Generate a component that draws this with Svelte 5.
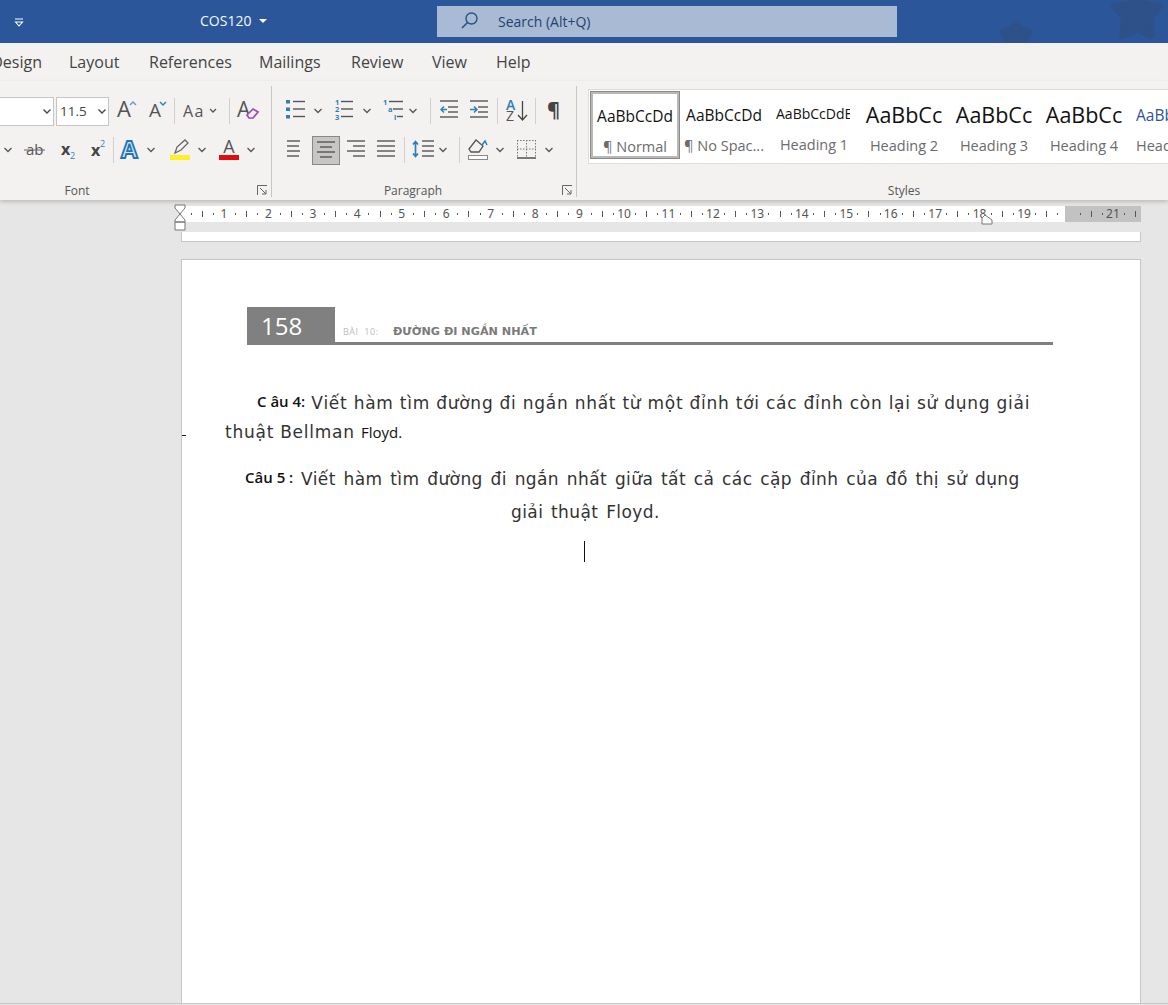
<script>
  const tabs = ['Design', 'Layout', 'References', 'Mailings', 'Review', 'View', 'Help'];

  const styles = [
    { sample: 'AaBbCcDd', label: '¶ Normal', kind: 'normal', on: true },
    { sample: 'AaBbCcDd', label: '¶ No Spac...', kind: 'normal' },
    { sample: 'AaBbCcDdE', label: 'Heading 1', kind: 'h1' },
    { sample: 'AaBbCc', label: 'Heading 2', kind: 'big' },
    { sample: 'AaBbCc', label: 'Heading 3', kind: 'big' },
    { sample: 'AaBbCc', label: 'Heading 4', kind: 'big' },
    { sample: 'AaBbCcDd', label: 'Heading 5', kind: 'h5' }
  ];

  // ruler: 0 sits at x=-1.5 inside the ruler box, one cm is 44.45px
  const cm = 44.45;
  const zero = -1.5;
  const marks = [];
  for (let q = 1; q <= 86; q++) {
    const v = q / 4;
    if (v === 20) continue;
    const x = zero + v * cm;
    if (q % 4 === 0) marks.push({ x, num: v });
    else if (q % 2 === 0) marks.push({ x, tall: true });
    else marks.push({ x });
  }
</script>

{#snippet chev(w)}
  <svg width={w} height="30" viewBox="0 0 {w} 30"><path d="M{w / 2 - 3.5} 13l3.5 3.5 3.5-3.5" fill="none" stroke="#555" stroke-width="1.3"/></svg>
{/snippet}

{#snippet launcher()}
  <svg class="launch" width="11" height="11" viewBox="0 0 11 11"><path d="M.5 10V.5H10M3 3l6 6M9 5v4H5" fill="none" stroke="#666" stroke-width="1"/></svg>
{/snippet}

{#snippet bars(x, ys, w)}
  {#each ys as y}<path d="M{x} {y}h{w}" stroke="#555" stroke-width="1.4"/>{/each}
{/snippet}

<div class="app">
  <header class="title">
    <div class="qat">
      <svg width="12" height="12" viewBox="0 0 12 12"><path d="M2 3h8M2.500 6l3.500 4 3.500-4z" fill="none" stroke="#fff" stroke-width="1.1"/></svg>
    </div>
    <div class="docname">COS120 <span class="caret"></span></div>
    <div class="search">
      <svg width="20" height="20" viewBox="0 0 20 20"><circle cx="11.500" cy="7.500" r="5.500" fill="none" stroke="#2b4f86" stroke-width="1.4"/><path d="M7.500 11.500L2 17" stroke="#2b4f86" stroke-width="1.6"/></svg>
      <span>Search (Alt+Q)</span>
    </div>
    <svg class="star one" width="36" height="30" viewBox="0 0 36 30"><path d="M18 5l6 6 7 2-4 8v8H9v-8l-4-8 7-2z" fill="#2d5188" stroke="#2d5188" stroke-width="6" stroke-linejoin="round"/></svg>
    <svg class="star two" width="56" height="42" viewBox="0 0 56 42"><path d="M28-8l8 12 15 2-10 12 2 18-15-6-15 6 2-18L5 6l15-2z" fill="#2d5188" stroke="#2d5188" stroke-width="6" stroke-linejoin="round"/></svg>
  </header>

  <nav class="tabs">
    {#each tabs as t}<span>{t}</span>{/each}
  </nav>

  <section class="ribbon">
    <div class="group font">
      <div class="row">
        <div class="combo name"><svg width="8" height="5" viewBox="0 0 8 5"><path d="M.5.5L4 4 7.500.5" fill="none" stroke="#444" stroke-width="1.3"/></svg></div>
        <div class="combo size"><span>11.5</span><svg width="8" height="5" viewBox="0 0 8 5"><path d="M.5.5L4 4 7.500.5" fill="none" stroke="#444" stroke-width="1.3"/></svg></div>
        <svg width="32" height="30" viewBox="0 0 32 30"><text x="3" y="21" class="glyph big">A</text><path d="M16 9l3-3 3 3" fill="none" stroke="#5a9fc9" stroke-width="1.4"/></svg>
        <svg width="28" height="30" viewBox="0 0 28 30"><text x="3" y="21" class="glyph mid">A</text><path d="M14 6l3 3 3-3" fill="none" stroke="#2f86bf" stroke-width="1.5"/></svg>
        <i class="sep"></i>
        <svg width="54" height="30" viewBox="0 0 54 30"><text x="8" y="21" class="glyph aa">Aa</text><path d="M35 13l3 3 3-3" fill="none" stroke="#555" stroke-width="1.3"/></svg>
        <i class="sep"></i>
        <svg width="34" height="30" viewBox="0 0 34 30"><text x="7" y="21" class="glyph mid2">A</text><path d="M17 19l6-6 5 3-5 6h-4z" fill="#f6ecf7" stroke="#9a4fb0" stroke-width="1.7"/></svg>
      </div>
      <div class="row r2">
        {@render chev(16)}
        <svg width="38" height="30" viewBox="0 0 38 30"><text x="10" y="20" class="glyph ab">ab</text><path d="M8 15h21" stroke="#666" stroke-width="1"/></svg>
        <svg width="24" height="30" viewBox="0 0 24 30"><text x="7" y="20" class="glyph sub">x</text><text x="16" y="24" class="glyph tiny">2</text></svg>
        <svg width="35" height="30" viewBox="0 0 35 30"><text x="13" y="21" class="glyph sub">x</text><text x="22" y="12" class="glyph tiny">2</text></svg>
        <i class="sep"></i>
        <svg width="31" height="30" viewBox="0 0 31 30"><text x="7" y="23" class="glyph fx">A</text></svg>
        {@render chev(12)}
        <svg width="40" height="30" viewBox="0 0 40 30"><path d="M18 18l2-6 8-7 3 3-7 7z" fill="#f3f2f1" stroke="#666" stroke-width="1.3"/><rect x="13" y="20" width="20" height="5" fill="#fdf126"/></svg>
        {@render chev(10)}
        <svg width="39" height="30" viewBox="0 0 39 30"><text x="22" y="18" text-anchor="middle" class="glyph mid3">A</text><rect x="12" y="20" width="20" height="5" fill="#e00f0f"/></svg>
        {@render chev(10)}
      </div>
      <div class="label">Font{@render launcher()}</div>
    </div>

    <div class="group para">
      <div class="row">
        <svg width="38" height="30" viewBox="0 0 38 30"><g fill="#2f7fb5"><rect x="14" y="4" width="4" height="3.500"/><rect x="14" y="11.500" width="4" height="3.500"/><rect x="14" y="19" width="4" height="3.500"/></g>{@render bars(21, [5.5, 13, 20.5], 12)}</svg>
        {@render chev(16)}
        <svg width="32" height="30" viewBox="0 0 32 30"><text x="9" y="9" class="glyph digit">1</text><text x="9" y="16" class="glyph digit">2</text><text x="9" y="24" class="glyph digit">3</text>{@render bars(15, [5.5, 13, 20.5], 12)}</svg>
        {@render chev(18)}
        <svg width="29" height="30" viewBox="0 0 29 30"><text x="7" y="9" class="glyph digit">1</text><text x="12" y="16" class="glyph digit">a</text><text x="18" y="24" class="glyph digit">i</text>{@render bars(13, [5.5], 14)}{@render bars(17, [13], 10)}{@render bars(21, [20.5], 6)}</svg>
        {@render chev(16)}
        <i class="sep wide"></i>
        <svg width="26" height="30" viewBox="0 0 26 30">{@render bars(0, [5, 21], 18)}{@render bars(8, [11, 16], 10)}<path d="M7 13.500H1m3-3l-3 3 3 3" fill="none" stroke="#2f7fb5" stroke-width="1.5"/></svg>
        <svg width="31" height="30" viewBox="0 0 31 30">{@render bars(4, [5, 21], 18)}{@render bars(12, [11, 16], 10)}<path d="M4 13.500h7m-3-3l3 3-3 3" fill="none" stroke="#2f7fb5" stroke-width="1.5"/></svg>
        <i class="sep"></i>
        <svg width="37" height="30" viewBox="0 0 37 30"><text x="8" y="14" class="glyph az blue">A</text><text x="8" y="25" class="glyph az">Z</text><path d="M24.500 5v19m-4.500-5l4.500 5 4.500-5" fill="none" stroke="#444" stroke-width="1.3"/></svg>
        <i class="sep"></i>
        <svg width="38" height="30" viewBox="0 0 38 30"><text x="11" y="21" class="glyph pil">¶</text></svg>
      </div>
      <div class="row r2">
        <svg width="28" height="30" viewBox="0 0 28 30">{@render bars(15, [6, 16], 18)}{@render bars(15, [11, 21], 12)}</svg>
        <div class="active"><svg width="18" height="18" viewBox="0 0 18 18">{@render bars(0, [1, 11], 18)}{@render bars(3, [6, 16], 12)}</svg></div>
        <svg width="30" height="30" viewBox="0 0 30 30">{@render bars(7, [6, 16], 18)}{@render bars(13, [11, 21], 12)}</svg>
        <svg width="34" height="30" viewBox="0 0 34 30">{@render bars(7, [6, 11, 16, 21], 18)}</svg>
        <i class="sep"></i>
        <svg width="32" height="30" viewBox="0 0 32 30"><path d="M10.500 7v14M8 9.500l2.500-3 2.500 3M8 18.500l2.500 3 2.500-3" fill="none" stroke="#2f7fb5" stroke-width="1.7"/>{@render bars(17, [6, 11, 16, 21], 12)}</svg>
        {@render chev(12)}
        <i class="sep wide2"></i>
        <svg width="34" height="30" viewBox="0 0 34 30"><path d="M9 14l7-9 7 6-4 6h-8z" fill="#f3f2f1" stroke="#555" stroke-width="1.3"/><path d="M22 10l3-4 2 4" fill="none" stroke="#2f7fb5" stroke-width="1.5"/><rect x="8.500" y="20.500" width="19" height="4" fill="#fff" stroke="#888"/></svg>
        {@render chev(12)}
        <svg width="37" height="30" viewBox="0 0 37 30"><path d="M11 5.500h19M11 14h19M20.500 5v18M11.500 5v18M29.500 5v18" fill="none" stroke="#777" stroke-width="1" stroke-dasharray="1.500 1.500"/><path d="M11 23h19" stroke="#444" stroke-width="1.400"/></svg>
        {@render chev(12)}
      </div>
      <div class="label">Paragraph{@render launcher()}</div>
    </div>

    <div class="group gallery">
      <div class="frame">
        {#each styles as s}
          <div class="style" class:on={s.on}>
            <div class="sample {s.kind}">{s.sample}</div>
            <div class="name">{s.label}</div>
          </div>
        {/each}
      </div>
      <div class="label">Styles</div>
    </div>
  </section>

  <main class="work">
    <div class="ruler">
      <div class="grey"></div>
      {#each marks as m}
        {#if m.num}
          <span class="num" style="left:{m.x}px">{m.num}</span>
        {:else}
          <span class="tick" class:tall={m.tall} style="left:{m.x}px"></span>
        {/if}
      {/each}
      <svg class="indent" width="12" height="28" viewBox="0 0 12 28"><path d="M1 1h10v3L6 10 1 4zM6 10l5 6v2H1v-2zM1 18h10v8H1z" fill="#fff" stroke="#777"/></svg>
      <svg class="right-indent" width="12" height="11" viewBox="0 0 12 11"><path d="M1 10V4l3-3 7 5v4z" fill="#fff" stroke="#777"/></svg>
    </div>
    <div class="page-end"></div>
    <article class="page">
      <div class="head">
        <div class="pageno">158</div>
        <div class="lesson"><span class="bai">BÀI 10:</span><b>ĐƯỜNG ĐI NGẮN NHẤT</b></div>
      </div>
      <p class="l1"><span class="cau">C âu 4:</span> Viết hàm tìm đường đi ngắn nhất từ một đỉnh tới các đỉnh còn lại sử dụng giải</p>
      <p class="l2">thuật Bellman <span class="floyd">Floyd.</span></p>
      <p class="l3"><span class="cau">Câu 5 :</span> Viết hàm tìm đường đi ngắn nhất giữa tất cả các cặp đỉnh của đồ thị sử dụng</p>
      <p class="l4">giải thuật Floyd.</p>
      <div class="cursor"></div>
      <span class="mark"></span>
    </article>
  </main>
</div>

<style>
  :global(body) {
    margin: 0;
    background: #e6e6e6;
  }
  .app {
    width: 1168px;
    height: 1005px;
    overflow: hidden;
    font-family: "Open Sans", "Noto Sans", sans-serif;
    display: flex;
    flex-direction: column;
  }

  .title {
    position: relative;
    height: 43px;
    flex: none;
    background: #2b579a;
    display: flex;
    align-items: center;
    color: #fff;
    overflow: hidden;
  }
  .qat {
    width: 200px;
    padding-left: 13px;
    box-sizing: border-box;
    display: flex;
  }
  .docname {
    width: 237px;
    font-size: 14px;
    color: #f4f6fa;
    display: flex;
    align-items: center;
    gap: 8px;
    margin-bottom: 2px;
  }
  .caret {
    width: 0;
    height: 0;
    border: 4px solid transparent;
    border-top: 4px solid #fff;
    border-bottom: 0;
  }
  .search {
    width: 460px;
    height: 31px;
    margin-bottom: 1px;
    background: #a9bbd4;
    color: #23416f;
    font-size: 14px;
    display: flex;
    align-items: center;
    gap: 18px;
    padding-left: 23px;
    box-sizing: border-box;
  }
  .star {
    position: absolute;
  }
  .star.one {
    left: 998px;
    top: 19px;
  }
  .star.two {
    left: 1109px;
    top: 0;
  }

  .tabs {
    height: 38px;
    flex: none;
    box-sizing: border-box;
    background: #f3f2f1;
    display: grid;
    grid-template-columns: 69px 80px 110px 92px 81px 64px 60px;
    align-items: center;
    font-size: 16px;
    color: #444;
  }
  .tabs span:first-child {
    justify-self: end;
    padding-right: 27px;
  }

  .ribbon {
    height: 119px;
    flex: none;
    background: #f3f2f1;
    display: flex;
    box-shadow: 0 2px 4px rgba(0, 0, 0, 0.18);
    position: relative;
    z-index: 1;
  }
  .group {
    position: relative;
    box-sizing: border-box;
    display: flex;
    flex-direction: column;
    padding-top: 15px;
    overflow: hidden;
  }
  .group::after {
    content: "";
    position: absolute;
    right: 0;
    top: 5px;
    bottom: 3px;
    width: 1px;
    background: #c8c6c4;
  }
  .font {
    width: 272px;
  }
  .para {
    width: 305px;
  }
  .gallery {
    flex: 1;
    padding-top: 8px;
  }
  .gallery::after {
    display: none;
  }
  .row {
    height: 30px;
    display: flex;
    align-items: center;
    flex: none;
  }
  .r2 {
    margin-top: 9px;
  }
  .row svg {
    flex: none;
  }
  .label {
    margin-top: auto;
    height: 21px;
    line-height: 24px;
    font-size: 12px;
    color: #555;
    text-align: center;
    position: relative;
    padding-right: 118px;
  }
  .gallery .label {
    padding-right: 0;
    padding-left: 63px;
  }
  .para .label {
    padding-right: 23px;
  }
  .launch {
    position: absolute;
    right: 4px;
    top: 6px;
  }

  .sep {
    width: 1px;
    height: 26px;
    background: #d2d0ce;
    flex: none;
  }
  .wide {
    margin: 0 9px;
  }
  .wide2 {
    margin: 0 0 0 10px;
  }

  .combo {
    height: 29px;
    box-sizing: border-box;
    border: 1px solid #c8c6c4;
    background: #fff;
    display: flex;
    align-items: center;
    justify-content: space-between;
    font-size: 13.500px;
    color: #444;
    padding-right: 2px;
    flex: none;
  }
  .combo.name {
    width: 54px;
    border-left: 0;
    justify-content: flex-end;
    margin-right: 2px;
  }
  .combo.size {
    width: 53px;
    padding-left: 3px;
    margin-right: 5px;
  }

  .glyph {
    font-family: "Open Sans", sans-serif;
    fill: #555;
  }
  .big { font-size: 22px; }
  .mid { font-size: 19px; }
  .aa { font-size: 16px; letter-spacing: 1.500px; }
  .mid2 { font-size: 21px; }
  .mid3 { font-size: 18px; }
  .ab { font-size: 15px; }
  .sub { font-size: 16px; font-weight: 700; fill: #444; }
  .tiny { font-size: 9px; fill: #2f86bf; }
  .fx {
    font-size: 24px;
    font-weight: 700;
    fill: #cfe4f4;
    stroke: #1f76b5;
    stroke-width: 1.800px;
  }
  .digit { font-size: 7.500px; font-weight: 700; fill: #2f7fb5; }
  .az { font-size: 14px; }
  .blue { fill: #2f7fb5; font-weight: 600; }
  .pil { font-size: 20px; font-weight: 700; fill: #444; }

  .active {
    width: 28px;
    height: 29px;
    flex: none;
    background: #c8c6c4;
    border: 1px solid #8a8886;
    box-sizing: border-box;
    display: flex;
    align-items: center;
    justify-content: center;
    margin-left: 12px;
  }

  .frame {
    width: 591px;
    height: 75px;
    margin-left: 11px;
    background: #fff;
    border: 1px solid #dcdcdc;
    border-right: 0;
    box-sizing: border-box;
    display: grid;
    grid-template-columns: repeat(7, 90px);
    overflow: hidden;
  }
  .style {
    box-sizing: border-box;
    text-align: center;
    white-space: nowrap;
    overflow: hidden;
    padding-top: 10px;
  }
  .style.on {
    border: 3px solid #b9b8b7;
    outline: 1px solid #8a8a8a;
    outline-offset: -1px;
    height: 68px;
    margin: 1px 0 0 1px;
    padding-top: 7px;
    width: 90px;
  }
  .sample {
    height: 30px;
    line-height: 30px;
    color: #111;
    font-size: 15.500px;
  }
  .sample.h1 {
    font-size: 14px;
    text-align: left;
    padding-left: 7px;
    overflow: hidden;
    margin-top: -1px;
    margin-bottom: 1px;
    margin-right: 9px;
  }
  .sample.big {
    font-size: 21.500px;
  }
  .sample.h5 {
    color: #2f5496;
    text-align: left;
    padding-left: 7px;
  }
  .style .name {
    font-size: 14.500px;
    line-height: 20px;
    margin-top: 6px;
    color: #6b6b6b;
  }
  .style:last-child .name {
    text-align: left;
    padding-left: 7px;
  }

  .work {
    flex: 1;
    background: #e6e6e6;
    position: relative;
    padding: 6px 27px 0 181px;
    min-height: 0;
    overflow: hidden;
    border-bottom: 1px solid #c8c8c8;
    margin-bottom: 1px;
  }
  .ruler {
    position: relative;
    height: 16px;
    width: 960px;
    background: #fff;
    font-family: "Noto Sans", sans-serif;
  }
  .grey {
    position: absolute;
    left: 884px;
    right: 0;
    top: 0;
    bottom: 0;
    background: #c2c2c2;
  }
  .num {
    position: absolute;
    top: 0;
    transform: translateX(-50%);
    font-size: 12px;
    line-height: 16px;
    color: #555;
  }
  .tick {
    position: absolute;
    top: 7px;
    width: 1px;
    height: 2px;
    background: #555;
  }
  .tick.tall {
    top: 5px;
    height: 6px;
  }
  .indent {
    position: absolute;
    left: -7px;
    top: -2px;
  }
  .right-indent {
    position: absolute;
    left: 800px;
    top: 8px;
  }

  .page-end {
    width: 960px;
    height: 10px;
    margin-top: 10px;
    background: #fff;
    border: 1px solid #c6c6c6;
    border-top: 0;
    box-sizing: border-box;
  }
  .page {
    position: relative;
    box-sizing: border-box;
    width: 960px;
    height: 760px;
    margin-top: 17px;
    background: #fff;
    border: 1px solid #c6c6c6;
    overflow: hidden;
    color: #333;
    font-family: "DejaVu Sans", sans-serif;
  }
  .head {
    margin: 47px 87px 0 65px;
    height: 38px;
    box-sizing: border-box;
    display: flex;
    border-bottom: 3px solid #808080;
  }
  .pageno {
    width: 88px;
    height: 35px;
    background: #808080;
    color: #fff;
    font-family: "Open Sans", sans-serif;
    font-size: 24px;
    line-height: 38px;
    padding-left: 14px;
    box-sizing: border-box;
  }
  .lesson {
    display: flex;
    align-items: flex-end;
    padding-left: 8px;
    padding-bottom: 3px;
    font-size: 9px;
    line-height: 14px;
    font-family: "Open Sans", sans-serif;
  }
  .bai {
    color: #bbb;
    width: 50px;
    font-size: 9px;
    letter-spacing: 0.500px;
    word-spacing: 3px;
  }
  .lesson b {
    color: #7a7a7a;
    font-size: 11.200px;
    font-family: "DejaVu Sans", sans-serif;
  }
  p {
    margin: 0;
    font-size: 17px;
    line-height: 24px;
    white-space: nowrap;
    letter-spacing: 0.750px;
  }
  .cau,
  .floyd {
    font-family: "Open Sans", sans-serif;
    font-size: 15px;
    color: #111;
    letter-spacing: 0;
    word-spacing: 0;
  }
  .cau {
    font-weight: 600;
    vertical-align: 2px;
    line-height: 1;
  }
  .l1 {
    margin: 46px 0 0 75px;
  }
  .l2 {
    margin: 5px 0 0 43px;
  }
  .l3 {
    margin: 23px 0 0 63px;
    letter-spacing: 0.400px;
    word-spacing: 2px;
  }
  .l4 {
    margin: 9px 0 0 329px;
    letter-spacing: 0.400px;
    word-spacing: 2px;
  }
  .cursor {
    width: 1px;
    height: 21px;
    margin: 17px 0 0 402px;
    background: #111;
  }
  .mark {
    position: absolute;
    left: 0;
    top: 175px;
    width: 4px;
    height: 1px;
    background: #222;
  }
</style>
